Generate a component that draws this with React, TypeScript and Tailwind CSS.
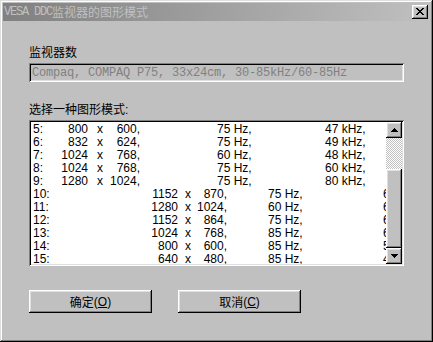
const rowsA = [
  ['5:', '800', '600,', '75 Hz,', '47 kHz,'],
  ['6:', '832', '624,', '75 Hz,', '49 kHz,'],
  ['7:', '1024', '768,', '60 Hz,', '48 kHz,'],
  ['8:', '1024', '768,', '75 Hz,', '60 kHz,'],
  ['9:', '1280', '1024,', '75 Hz,', '80 kHz,'],
]

const rowsB = [
  ['10:', '1152', '870,', '75 Hz,', '68 kHz,'],
  ['11:', '1280', '1024,', '60 Hz,', '64 kHz,'],
  ['12:', '1152', '864,', '75 Hz,', '67 kHz,'],
  ['13:', '1024', '768,', '85 Hz,', '68 kHz,'],
  ['14:', '800', '600,', '85 Hz,', '53 kHz,'],
  ['15:', '640', '480,', '85 Hz,', '43 kHz,'],
]

const raised =
  'shadow-[inset_-1px_-1px_0_#000,inset_1px_1px_0_#fff,inset_-2px_-2px_0_#808080,inset_2px_2px_0_#dfdfdf]'
const sunken =
  'shadow-[inset_1px_1px_0_#808080,inset_-1px_-1px_0_#fff,inset_2px_2px_0_#000,inset_-2px_-2px_0_#dfdfdf]'

function CloseGlyph() {
  // 8x7 pixel cross, like the old title bar button
  const px = [
    [0, 0], [1, 0], [6, 0], [7, 0],
    [1, 1], [2, 1], [5, 1], [6, 1],
    [2, 2], [3, 2], [4, 2], [5, 2],
    [3, 3], [4, 3],
    [2, 4], [3, 4], [4, 4], [5, 4],
    [1, 5], [2, 5], [5, 5], [6, 5],
    [0, 6], [1, 6], [6, 6], [7, 6],
  ]
  return (
    <svg width="8" height="7" viewBox="0 0 8 7" shapeRendering="crispEdges">
      {px.map(([x, y]) => (
        <rect key={`${x}-${y}`} x={x} y={y} width="1" height="1" fill="#000" />
      ))}
    </svg>
  )
}

function Arrow({ down }: { down?: boolean }) {
  const rows = down ? [7, 5, 3, 1] : [1, 3, 5, 7]
  return (
    <svg width="7" height="4" viewBox="0 0 7 4" shapeRendering="crispEdges">
      {rows.map((w, i) => (
        <rect key={i} x={(7 - w) / 2} y={i} width={w} height="1" fill="#000" />
      ))}
    </svg>
  )
}

function ModeRowA({ r }: { r: string[] }) {
  return (
    <div className="flex h-[13px] leading-[13px] whitespace-nowrap">
      <span className="w-[27px] shrink-0">{r[0]}</span>
      <span className="w-[28px] shrink-0 text-right">{r[1]}</span>
      <span className="ml-[9px] w-[6px] shrink-0">x</span>
      <span className="w-[37px] shrink-0 text-right">{r[2]}</span>
      <span className="ml-[77px] w-[108px] shrink-0">{r[3]}</span>
      <span className="shrink-0">{r[4]}</span>
    </div>
  )
}

function ModeRowB({ r }: { r: string[] }) {
  return (
    <div className="flex h-[13px] leading-[13px] whitespace-nowrap">
      <span className="w-[27px] shrink-0">{r[0]}</span>
      <span className="w-[118px] shrink-0 text-right">{r[1]}</span>
      <span className="ml-[7px] w-[6px] shrink-0">x</span>
      <span className="w-[36px] shrink-0 text-right">{r[2]}</span>
      <span className="ml-[41px] w-[115px] shrink-0">{r[3]}</span>
      <span className="shrink-0">{r[4]}</span>
    </div>
  )
}

export default function App() {
  return (
    <div
      className={`flex h-[342px] w-[433px] flex-col bg-[#c0c0c0] p-[3px] text-[12px] text-black font-['Liberation_Sans','Noto_Sans_CJK_SC',sans-serif] shadow-[inset_-1px_-1px_0_#000,inset_1px_1px_0_#dfdfdf,inset_-2px_-2px_0_#808080,inset_2px_2px_0_#fff]`}
    >
      {/* title bar (inactive) */}
      <div className="flex h-[18px] shrink-0 items-center justify-between bg-[linear-gradient(to_right,#808080,#c0c0c0)] pl-[1px] pr-[2px]">
        <div className="flex items-center leading-[12px] text-[#c0c0c0]">
          <span className="font-['Liberation_Mono',monospace] tracking-[-1.2px]">VESA DDC</span>
          <span className="font-['Noto_Sans_CJK_SC',sans-serif]">监视器的图形模式</span>
        </div>
        <div className={`flex h-[14px] w-[16px] items-start justify-start bg-[#c0c0c0] pl-[4px] pt-[3px] ${raised}`}>
          <CloseGlyph />
        </div>
      </div>

      <div className="flex flex-col px-[26px]">
        <div className="mt-[25px] h-[12px] leading-[12px] font-['Noto_Sans_CJK_SC',sans-serif]">监视器数</div>

        <div className={`mt-[5px] flex h-[19px] items-center px-[2px] ${sunken}`}>
          <span className="pl-[1px] leading-[12px] text-[#808080] font-['Liberation_Mono',monospace] tracking-[-0.2px] whitespace-nowrap">
            Compaq, COMPAQ P75, 33x24cm, 30-85kHz/60-85Hz
          </span>
        </div>

        <div className="mt-[21px] h-[12px] leading-[12px]">
          <span className="font-['Noto_Sans_CJK_SC',sans-serif]">选择一种图形模式</span>:
        </div>

        <div className={`mt-[5px] flex h-[146px] bg-white p-[2px] ${sunken}`}>
          <div className="min-w-0 flex-1 overflow-hidden pl-[2px] pt-[1px]">
            {rowsA.map((r) => (
              <ModeRowA key={r[0]} r={r} />
            ))}
            {rowsB.map((r) => (
              <ModeRowB key={r[0]} r={r} />
            ))}
          </div>
          {/* scrollbar */}
          <div className="flex w-[16px] shrink-0 flex-col">
            <div className={`flex h-[16px] shrink-0 items-center justify-center bg-[#c0c0c0] ${raised}`}>
              <Arrow />
            </div>
            <div className="h-[31px] shrink-0 [background-image:repeating-conic-gradient(#fff_0_25%,#c0c0c0_0_50%)] [background-size:2px_2px]" />
            <div className={`flex-1 bg-[#c0c0c0] ${raised}`} />
            <div className={`flex h-[16px] shrink-0 items-center justify-center bg-[#c0c0c0] ${raised}`}>
              <Arrow down />
            </div>
          </div>
        </div>

        <div className="mt-[24px] flex gap-[26px]">
          <button className={`flex h-[23px] w-[123px] items-center justify-center bg-[#c0c0c0] leading-[12px] ${raised}`}>
            <span className="font-['Noto_Sans_CJK_SC',sans-serif]">确定</span>
            (<span className="underline underline-offset-1">O</span>)
          </button>
          <button className={`flex h-[23px] w-[123px] items-center justify-center bg-[#c0c0c0] leading-[12px] ${raised}`}>
            <span className="font-['Noto_Sans_CJK_SC',sans-serif]">取消</span>
            (<span className="underline underline-offset-1">C</span>)
          </button>
        </div>
      </div>
    </div>
  )
}
